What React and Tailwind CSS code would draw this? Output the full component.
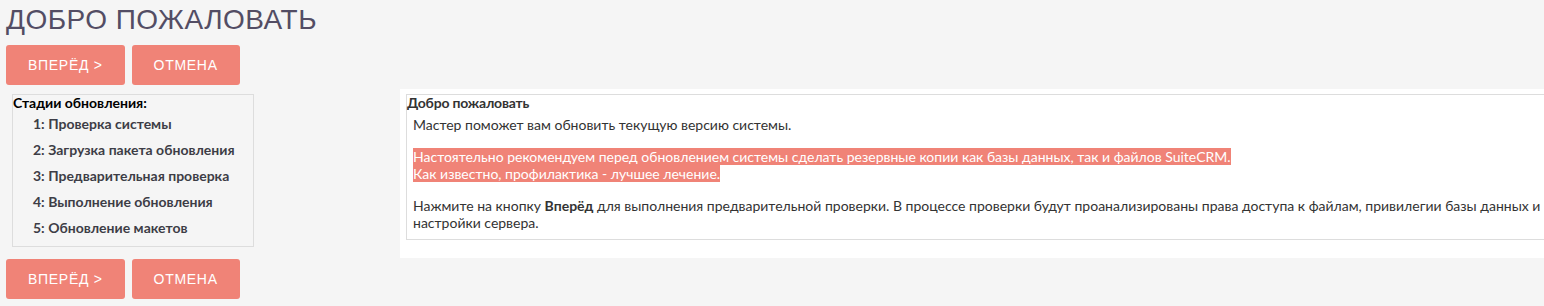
import React from 'react';

const Btn = ({ children }) => (
  <button className="h-10 rounded-[3px] bg-[#f08377] px-[22px] text-[14px] tracking-[0.7px] text-white font-['Liberation_Sans',Arial,sans-serif]">
    {children}
  </button>
);

const Buttons = () => (
  <div className="flex gap-[7px] pl-[6px]">
    <Btn>ВПЕРЁД &gt;</Btn>
    <Btn>ОТМЕНА</Btn>
  </div>
);

const steps = [
  '1: Проверка системы',
  '2: Загрузка пакета обновления',
  '3: Предварительная проверка',
  '4: Выполнение обновления',
  '5: Обновление макетов',
];

const App = () => {
  return (
    <div className="min-h-screen w-[1544px] overflow-hidden bg-[#f5f5f5] font-['Lato',sans-serif]">
      <h1 className="pl-[6px] pt-[3px] text-[28px] leading-[33px] tracking-[0.5px] text-[#534d64] font-['Liberation_Sans',Arial,sans-serif]">
        ДОБРО ПОЖАЛОВАТЬ
      </h1>
      <div className="mt-[9px]">
        <Buttons />
      </div>
      <div className="mt-1 flex">
        <div className="w-[400px] shrink-0 pt-[5px] pl-[12px]">
          <div className="w-[242px] border border-[#dddddd] pb-[5px]">
            <div className="text-[14px] font-bold leading-[16px] text-black">Стадии обновления:</div>
            <ul className="pl-[20px] text-[14px] font-bold text-[#3d3d46]">
              {steps.map((s) => (
                <li key={s} className="leading-[26px]">{s}</li>
              ))}
            </ul>
          </div>
        </div>
        <div className="w-[1144px] shrink-0 bg-white pl-[6px] pt-[5px] pb-[18px]">
          <div className="w-[1200px] border border-[#dddddd] pb-[8px]">
            <div className="text-[14px] font-bold leading-[16px] tracking-[-0.2px] text-[#333]">Добро пожаловать</div>
            <div className="pl-[6px] text-[14px] leading-[17px] text-[#333]">
              <p className="mt-[5px]">Мастер поможет вам обновить текущую версию системы.</p>
              <p className="mt-[15px]">
                <span className="bg-[#f08377] text-white">Настоятельно рекомендуем перед обновлением системы сделать резервные копии как базы данных, так и файлов SuiteCRM.</span>
                <br />
                <span className="bg-[#f08377] text-white">Как известно, профилактика - лучшее лечение.</span>
              </p>
              <p className="mt-[15px] w-[1135px]">
                Нажмите на кнопку <b>Вперёд</b> для выполнения предварительной проверки. В процессе проверки будут проанализированы права доступа к файлам, привилегии базы данных и настройки сервера.
              </p>
            </div>
          </div>
        </div>
      </div>
      <div className="mt-[1px]">
        <Buttons />
      </div>
    </div>
  );
};

export default App;
